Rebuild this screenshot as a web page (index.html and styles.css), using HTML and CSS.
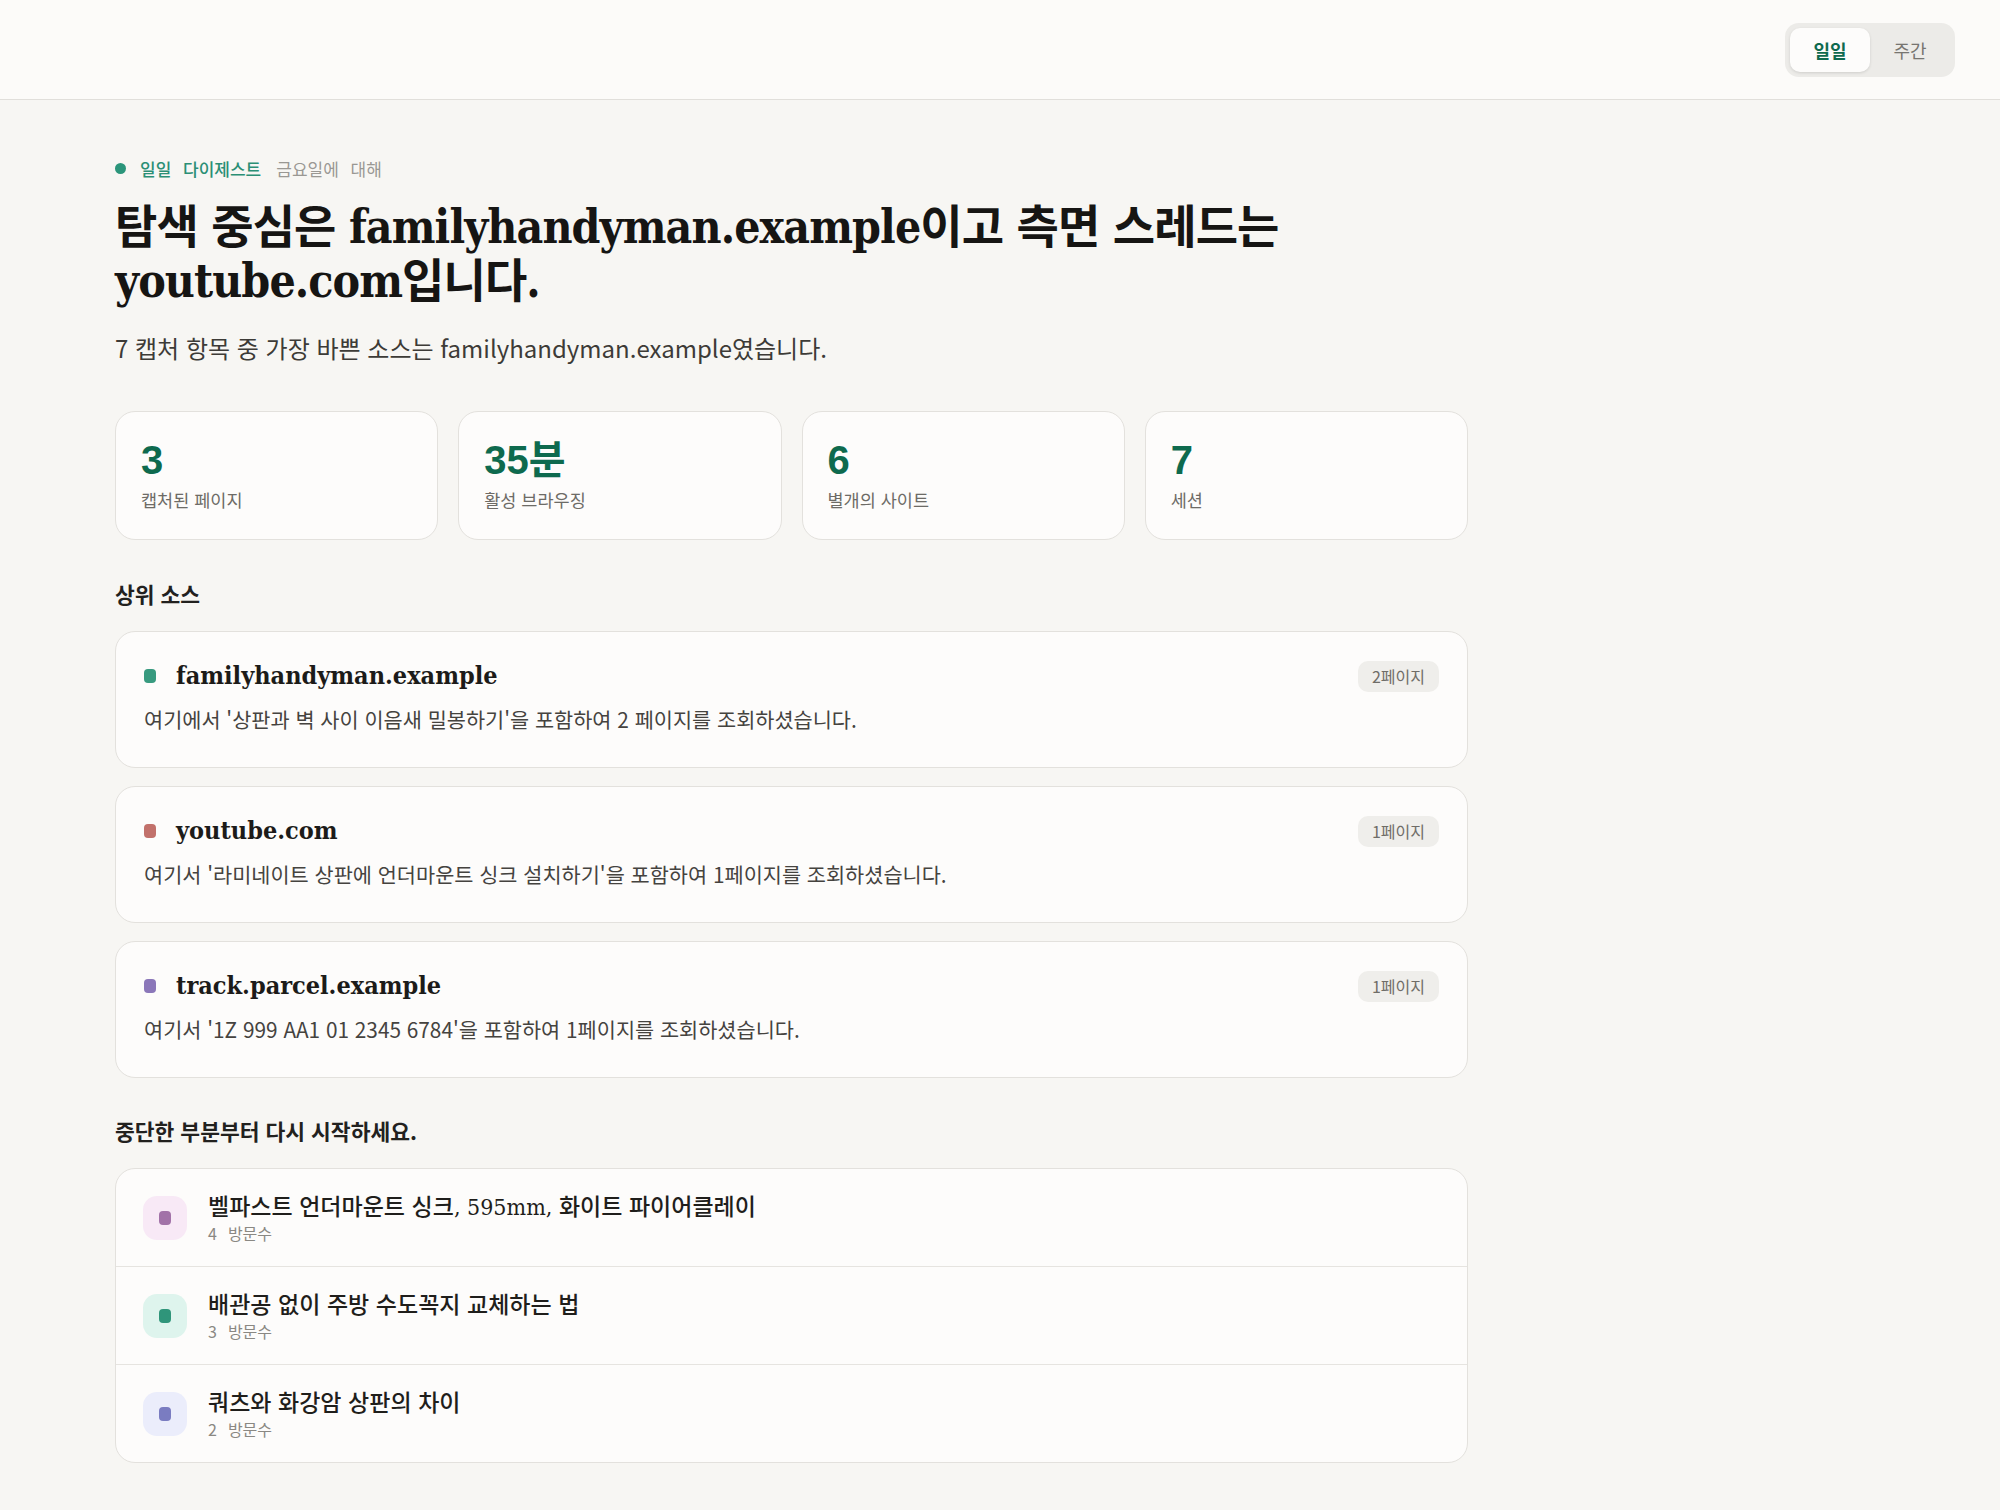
FILE: index.html
```html
<!DOCTYPE html>
<html lang="ko">
<head>
  <meta charset="UTF-8">
  <meta name="viewport" content="width=device-width, initial-scale=1.0">
  <title>일일 다이제스트</title>
  <link rel="stylesheet" href="styles.css">
</head>
<body>
  <header class="topbar">
    <div class="range-toggle">
      <button class="range-btn active">일일</button>
      <button class="range-btn">주간</button>
    </div>
  </header>

  <main class="digest">
    <p class="eyebrow">
      <span class="eyebrow-dot"></span>
      <span class="eyebrow-kind">일일 다이제스트</span>
      <span class="eyebrow-date">금요일에 대해</span>
    </p>
    <h1 class="headline">탐색 중심은 familyhandyman.example이고 측면 스레드는 youtube.com입니다.</h1>
    <p class="lede">7 캡처 항목 중 가장 바쁜 소스는 familyhandyman.example였습니다.</p>

    <section class="stats">
      <div class="stat">
        <div class="stat-value">3</div>
        <div class="stat-label">캡처된 페이지</div>
      </div>
      <div class="stat">
        <div class="stat-value">35분</div>
        <div class="stat-label">활성 브라우징</div>
      </div>
      <div class="stat">
        <div class="stat-value">6</div>
        <div class="stat-label">별개의 사이트</div>
      </div>
      <div class="stat">
        <div class="stat-value">7</div>
        <div class="stat-label">세션</div>
      </div>
    </section>

    <h2 class="section-title">상위 소스</h2>
    <section class="sources">
      <article class="source">
        <div class="source-head">
          <div class="source-name"><span class="swatch teal"></span>familyhandyman.example</div>
          <span class="badge">2페이지</span>
        </div>
        <p class="source-desc">여기에서 '상판과 벽 사이 이음새 밀봉하기'을 포함하여 2 페이지를 조회하셨습니다.</p>
      </article>
      <article class="source">
        <div class="source-head">
          <div class="source-name"><span class="swatch rose"></span>youtube.com</div>
          <span class="badge">1페이지</span>
        </div>
        <p class="source-desc">여기서 '라미네이트 상판에 언더마운트 싱크 설치하기'을 포함하여 1페이지를 조회하셨습니다.</p>
      </article>
      <article class="source">
        <div class="source-head">
          <div class="source-name"><span class="swatch violet"></span>track.parcel.example</div>
          <span class="badge">1페이지</span>
        </div>
        <p class="source-desc">여기서 '1Z 999 AA1 01 2345 6784'을 포함하여 1페이지를 조회하셨습니다.</p>
      </article>
    </section>

    <h2 class="section-title resume-heading">중단한 부분부터 다시 시작하세요.</h2>
    <section class="resume">
      <div class="resume-row">
        <span class="resume-icon pink"><span></span></span>
        <div>
          <div class="resume-title">벨파스트 언더마운트 싱크, 595mm, 화이트 파이어클레이</div>
          <div class="resume-meta"><span>4</span>방문수</div>
        </div>
      </div>
      <div class="resume-row">
        <span class="resume-icon mint"><span></span></span>
        <div>
          <div class="resume-title">배관공 없이 주방 수도꼭지 교체하는 법</div>
          <div class="resume-meta"><span>3</span>방문수</div>
        </div>
      </div>
      <div class="resume-row">
        <span class="resume-icon lilac"><span></span></span>
        <div>
          <div class="resume-title">쿼츠와 화강암 상판의 차이</div>
          <div class="resume-meta"><span>2</span>방문수</div>
        </div>
      </div>
    </section>
  </main>
</body>
</html>
```

FILE: styles.css
```css
* {
  margin: 0;
  padding: 0;
  box-sizing: border-box;
}
body {
  background-color: #f7f6f3;
  color: #1c1b19;
  font-family: "Noto Sans CJK KR", sans-serif;
}

/* 상단 바 */
.topbar {
  height: 100px;
  display: flex;
  justify-content: flex-end;
  align-items: center;
  padding-right: 45px;
  background-color: #fcfbf9;
  border-bottom: 1px solid #e1dfdb;
}
.range-toggle {
  display: flex;
  padding: 5px;
  background-color: #ecebe8;
  border-radius: 14px;
}
.range-btn {
  width: 80px;
  height: 44px;
  border: none;
  border-radius: 10px;
  background: none;
  font-family: inherit;
  font-size: 18px;
  color: #777570;
  cursor: pointer;
}
.range-btn.active {
  background-color: #fdfcfb;
  color: #0f6a4f;
  font-weight: 700;
  box-shadow: 0 1px 3px rgba(0, 0, 0, 0.12);
}

/* 본문 */
.digest {
  width: 1468px;
  padding: 56px 0 48px 115px;
}
.eyebrow {
  display: flex;
  align-items: center;
  height: 24px;
  font-size: 17px;
}
.eyebrow-dot {
  width: 11px;
  height: 11px;
  border-radius: 50%;
  background-color: #2b957a;
  margin-right: 14px;
}
.eyebrow-kind {
  color: #2b8f75;
  font-weight: 500;
  word-spacing: 7px;
}
.eyebrow-date {
  color: #9a9893;
  margin-left: 15px;
  word-spacing: 7px;
}
.headline {
  margin-top: 20px;
  font-family: "DejaVu Serif Condensed", "Liberation Serif", "Noto Sans CJK KR", serif;
  font-size: 46px;
  line-height: 54px;
  font-weight: 700;
  letter-spacing: -0.02em;
  word-break: keep-all;
  color: #161513;
}
.lede {
  margin-top: 24px;
  font-size: 24px;
  line-height: 32px;
  color: #3d3b37;
}

/* 통계 카드 */
.stats {
  margin-top: 47px;
  display: grid;
  grid-template-columns: repeat(4, 1fr);
  gap: 20px;
}
.stat {
  background-color: #fdfcfb;
  border: 1px solid #e3e1dd;
  border-radius: 20px;
  padding: 24px 25px 27px;
}
.stat-value {
  font-family: "Liberation Sans", "Noto Sans CJK KR", sans-serif;
  font-size: 40px;
  line-height: 48px;
  font-weight: 700;
  color: #0e6a4e;
}
.stat-label {
  margin-top: 4px;
  font-size: 17.5px;
  line-height: 24px;
  color: #6d6b66;
}

.section-title {
  margin-top: 40px;
  font-size: 21.5px;
  line-height: 28px;
  font-weight: 600;
  color: #22211e;
}
.resume-heading {
  margin-top: 39px;
}

/* 상위 소스 */
.sources {
  margin-top: 23px;
  display: flex;
  flex-direction: column;
  gap: 18px;
}
.source {
  background-color: #fdfcfb;
  border: 1px solid #e3e1dd;
  border-radius: 20px;
  padding: 28px 28px 33px;
}
.source-head {
  display: flex;
  justify-content: space-between;
  align-items: center;
}
.source-name {
  display: flex;
  align-items: center;
  font-family: "DejaVu Serif Condensed", "Liberation Serif", serif;
  font-size: 25px;
  line-height: 32px;
  font-weight: 700;
  color: #1c1b19;
}
.swatch {
  width: 12px;
  height: 14px;
  border-radius: 4px;
  margin-right: 20px;
}
.swatch.teal { background-color: #389a7f; }
.swatch.rose { background-color: #c2716b; }
.swatch.violet { background-color: #8b77b9; }
.badge {
  padding: 0 14px;
  height: 31px;
  line-height: 31px;
  border-radius: 10px;
  background-color: #efeeeb;
  font-size: 16px;
  color: #6f6d68;
}
.source-desc {
  margin-top: 12px;
  font-size: 20.8px;
  line-height: 30px;
  color: #45433f;
}

/* 이어보기 */
.resume {
  margin-top: 23px;
  background-color: #fdfcfb;
  border: 1px solid #e3e1dd;
  border-radius: 20px;
  overflow: hidden;
}
.resume-row {
  display: flex;
  align-items: center;
  gap: 21px;
  padding: 24px 27px 23px;
}
.resume-row + .resume-row {
  border-top: 1px solid #e6e4e0;
}
.resume-icon {
  width: 44px;
  height: 44px;
  border-radius: 14px;
  display: flex;
  align-items: center;
  justify-content: center;
}
.resume-icon span {
  width: 12px;
  height: 14px;
  border-radius: 4px;
}
.resume-icon.pink { background-color: #f8e9f6; }
.resume-icon.pink span { background-color: #a272a8; }
.resume-icon.mint { background-color: #def4ed; }
.resume-icon.mint span { background-color: #2f957a; }
.resume-icon.lilac { background-color: #ebedfb; }
.resume-icon.lilac span { background-color: #7a7cc1; }
.resume-title {
  font-family: "DejaVu Serif Condensed", "Liberation Serif", "Noto Sans CJK KR", serif;
  font-size: 23px;
  line-height: 28px;
  font-weight: 500;
  color: #1f1e1b;
}
.resume-meta {
  margin-top: 2px;
  font-size: 16px;
  line-height: 20px;
  color: #8a8883;
}
.resume-meta span {
  margin-right: 11px;
}
```
